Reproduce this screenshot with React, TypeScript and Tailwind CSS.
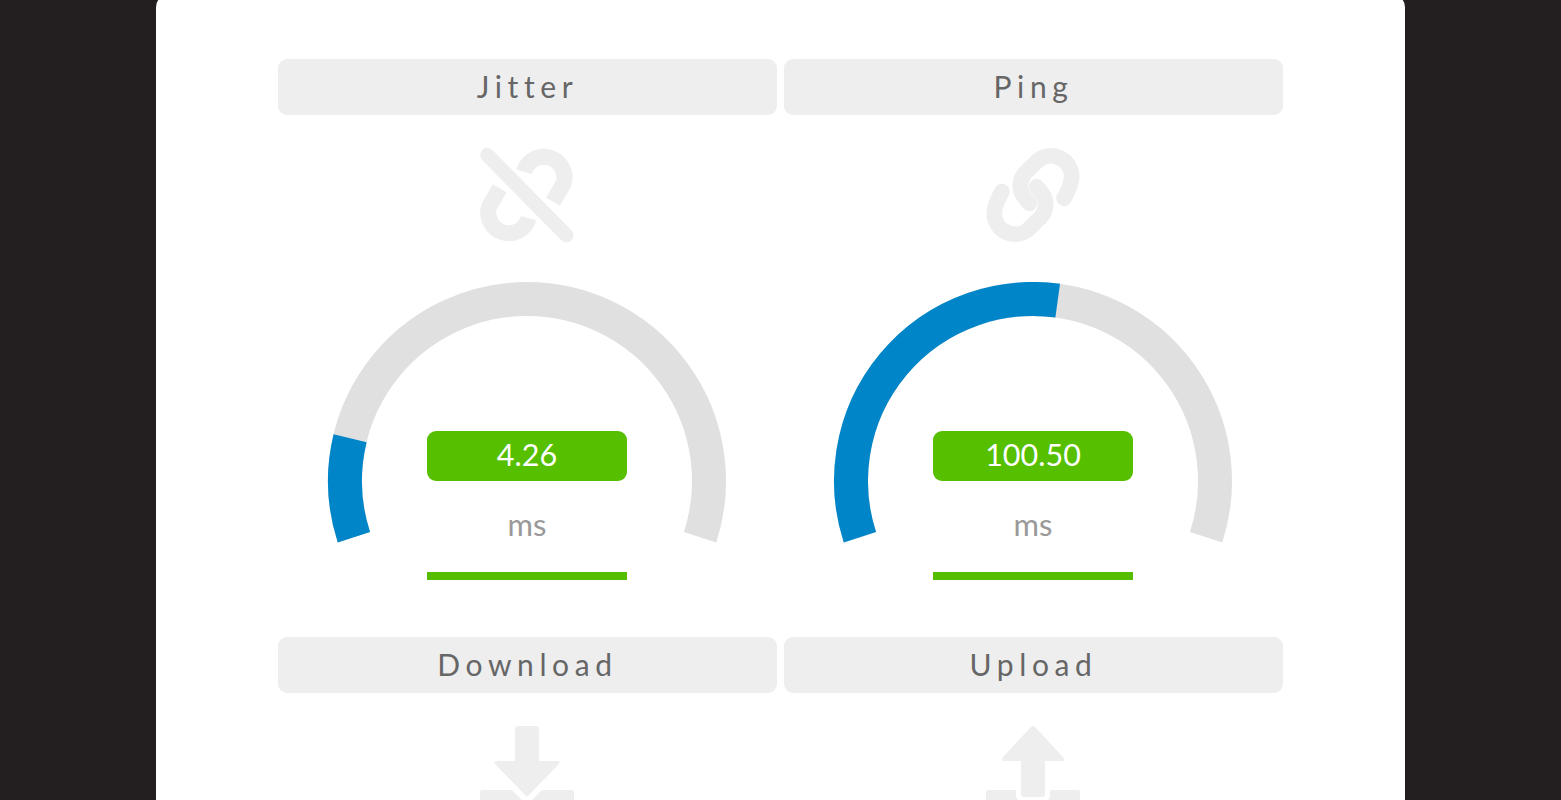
import React from "react";

const polar = (deg: number) => {
  const rad = ((deg - 90) * Math.PI) / 180;
  return `${200 + 182 * Math.cos(rad)} ${199 + 182 * Math.sin(rad)}`;
};

const arc = (from: number, to: number) =>
  `M ${polar(from)} A 182 182 0 ${to - from > 180 ? 1 : 0} 1 ${polar(to)}`;

const Gauge = ({ value, end }: { value: string; end: number }) => (
  <div className="relative mt-[38px] -ml-px h-[298px] w-[400px]">
    <svg width="400" height="270" viewBox="0 0 400 270" fill="none">
      <path d={arc(-108, 108)} stroke="#e0e0e0" strokeWidth="34" />
      <path d={arc(-108, end)} stroke="#0085c8" strokeWidth="34" />
    </svg>
    <div className="absolute inset-x-0 top-[149px] flex flex-col items-center">
      <div className="flex h-[50px] w-[200px] items-center justify-center rounded-[9px] bg-[#55bf00] pb-[2px] text-[30.5px] text-white">
        {value}
      </div>
      <div className="mt-[18px] text-[31px] leading-[50px] text-[#999999]">ms</div>
      <div className="mt-[23px] h-2 w-[200px] bg-[#55bd00]" />
    </div>
  </div>
);

const UnlinkIcon = () => (
  <svg width="96" height="96" viewBox="60 54 288 288" fill="none" stroke="#eeeeee" strokeWidth="48">
    <path d="M195 125 A62 62 0 1 1 314 160 L282 215" />
    <path d="M209 265 A62 62 0 1 1 90 230 L122 175" />
    <path d="M85 75 L322 316" strokeWidth="43" strokeLinecap="round" />
  </svg>
);

const LinkIcon = () => (
  <svg width="96" height="96" viewBox="75 54 288 288" fill="none" stroke="#eeeeee" strokeWidth="47">
    <path d="M208 220 L192 200 C175 178 178 148 196 128 L229 96 A62 62 0 0 1 335 140 Q335 165 312 205" strokeLinecap="round" />
    <path d="M230 170 L246 190 C263 212 260 242 242 262 L209 294 A62 62 0 0 1 103 250 Q103 225 126 185" strokeLinecap="round" />
  </svg>
);

const DownloadIcon = () => (
  <svg width="96" height="96" viewBox="0 0 96 96" fill="#eeeeee">
    <path d="M36 3 Q36 0 39 0 H57 Q60 0 60 3 V35 H78 Q82 35 80 38 L48 71 L16 38 Q14 35 18 35 H36 Z" />
    <path d="M3 64 H33 L47 78 L49 78 L63 64 H93 Q95 64 95 66 V96 H1 V66 Q1 64 3 64 Z" />
  </svg>
);

const UploadIcon = () => (
  <svg width="96" height="96" viewBox="0 0 96 96" fill="#eeeeee">
    <path d="M36 68 Q36 71 39 71 H57 Q60 71 60 68 V35 H76 Q81 35 78 31 L50 1 Q48 -1 46 1 L18 31 Q15 35 20 35 H36 Z" />
    <path d="M3 64 H31 V70 Q32 76 38 76 H58 Q64 76 65 70 V64 H93 Q95 64 95 66 V96 H1 V66 Q1 64 3 64 Z" />
  </svg>
);

const Cell = ({ title, icon, children }: { title: string; icon: React.ReactNode; children?: React.ReactNode }) => (
  <div className="flex flex-col items-center">
    <div className="flex h-14 w-full items-center justify-center rounded-[9px] bg-[#eeeeee] pb-[2px] text-[30px] tracking-[5.6px] text-[#666666]">
      {title}
    </div>
    <div className="mt-[33px] -ml-px h-[96px] w-[96px]">{icon}</div>
    {children}
  </div>
);

export default function App() {
  return (
    <div className="h-screen overflow-hidden bg-[#231f20] font-['Lato',sans-serif]">
      <div className="mx-auto -mt-[5px] w-[1249px] rounded-xl bg-white px-[122px] pt-[64px] pb-10">
        <div className="grid grid-cols-2 gap-x-[7px] gap-y-[57px]">
          <Cell title="Jitter" icon={<UnlinkIcon />}>
            <Gauge value="4.26" end={-76.4} />
          </Cell>
          <Cell title="Ping" icon={<LinkIcon />}>
            <Gauge value="100.50" end={7.8} />
          </Cell>
          <Cell title="Download" icon={<DownloadIcon />} />
          <Cell title="Upload" icon={<UploadIcon />} />
        </div>
      </div>
    </div>
  );
}
